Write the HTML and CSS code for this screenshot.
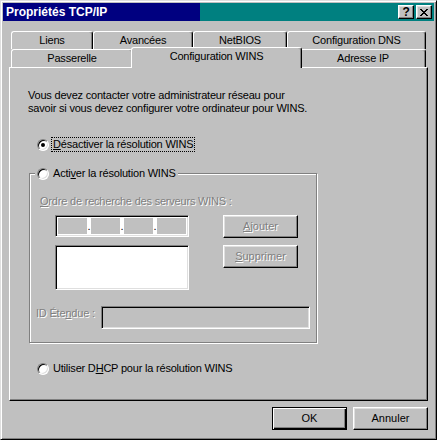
FILE: index.html
```html
<!doctype html>
<html><head>
<meta charset="utf-8">
<title>Propriétés TCP/IP</title>
<link rel="stylesheet" href="styles.css">
</head><body>
<div class="window">
	<div class="titlebar">
		<h1>Propriétés TCP/IP</h1>
		<span class="title-btn">?</span>
		<span class="title-btn close"><svg width="8" height="7" viewBox="0 0 8 7"><path d="M0 0h2v1h1v1h2v-1h1v-1h2v1h-1v1h-1v1h-1v1h1v1h1v1h1v1h-2v-1h-1v-1h-2v1h-1v1h-2v-1h1v-1h1v-1h1v-1h-1v-1h-1v-1h-1z" fill="#000"/></svg></span>
	</div>

	<div class="tabs">
		<div class="tab-row">
			<div class="tab" style="width:82px">Liens</div>
			<div class="tab" style="width:100px">Avancées</div>
			<div class="tab" style="width:94px">NetBIOS</div>
			<div class="tab" style="width:139px">Configuration DNS</div>
		</div>
		<div class="tab-row">
			<div class="tab" style="width:122px">Passerelle</div>
			<div class="tab active" style="width:171px">Configuration WINS</div>
			<div class="tab" style="width:126px">Adresse IP</div>
		</div>
	</div>

	<div class="panel">
		<p class="intro">Vous devez contacter votre administrateur réseau pour<br>savoir si vous devez configurer votre ordinateur pour WINS.</p>

		<div class="radio-row first">
			<span class="radio checked"></span>
			<span class="focus"><u>D</u>ésactiver la résolution WINS</span>
		</div>

		<fieldset class="group">
			<legend class="radio-row">
				<span class="radio"></span>
				<span>Acti<u>v</u>er la résolution WINS</span>
			</legend>
			<div class="disabled"><u>O</u>rdre de recherche des serveurs WINS :</div>
			<div class="server-row">
				<div class="ip-col">
					<div class="field ip-field">
						<span class="octet"></span><span class="dot">.</span>
						<span class="octet"></span><span class="dot">.</span>
						<span class="octet"></span><span class="dot">.</span>
						<span class="octet"></span>
					</div>
					<div class="field listbox"></div>
				</div>
				<div class="btn-col">
					<button class="btn disabled" disabled><u>A</u>jouter</button>
					<button class="btn disabled" disabled><u>S</u>upprimer</button>
				</div>
			</div>
			<div class="scope-row">
				<label class="disabled">ID Éte<u>n</u>due :</label>
				<div class="field scope-field"></div>
			</div>
		</fieldset>

		<div class="radio-row last">
			<span class="radio"></span>
			<span>Utiliser D<u>H</u>CP pour la résolution WINS</span>
		</div>
	</div>

	<div class="actions">
		<button class="btn default">OK</button>
		<button class="btn">Annuler</button>
	</div>
</div>
</body></html>
```

FILE: styles.css
```css
body {
	margin: 0;
	background: #c0c0c0;
	font: 11px/13px 'Liberation Sans', Arial, sans-serif;
	letter-spacing: -0.2px;
	color: #000;
}

u {
	text-decoration: underline;
	text-underline-offset: 1px;
}

.window {
	width: 437px;
	height: 440px;
	box-sizing: border-box;
	padding: 2px;
	border: 1px solid;
	border-color: #dfdfdf #000 #000 #dfdfdf;
	box-shadow: inset 1px 1px #fff, inset -1px -1px #808080;
}

/* title bar */
.titlebar {
	display: flex;
	align-items: center;
	height: 18px;
	padding: 0 2px 0 3px;
	background: linear-gradient(to right, #000080 197px, #008080 197px);
	color: #fff;
	font-weight: bold;
}

.titlebar h1 {
	flex: 1;
	margin: 0;
	font: inherit;
	font-size: 12px;
	letter-spacing: 0;
	line-height: 18px;
}

.title-btn {
	display: flex;
	align-items: center;
	justify-content: center;
	width: 16px;
	height: 14px;
	box-sizing: border-box;
	margin-left: 2px;
	background: #c0c0c0;
	color: #000;
	font-size: 12px;
	border: 1px solid;
	border-color: #fff #000 #000 #fff;
	box-shadow: inset -1px -1px #808080, inset 1px 1px #dfdfdf;
}

/* tabs */
.tabs {
	width: 415px;
	margin: 10px 0 0 8px;
}

.tab-row {
	display: flex;
	align-items: flex-start;
	height: 18px;
}

.tab {
	height: 18px;
	box-sizing: border-box;
	padding-top: 2px;
	text-align: center;
	background: #c0c0c0;
	border: 1px solid #fff;
	border-bottom: 0;
	border-right-color: #000;
	border-radius: 3px 3px 0 0;
	box-shadow: inset -1px 0 #808080;
}

.tab.active {
	position: relative;
	z-index: 1;
	height: 21px;
	margin: -2px -2px 0 -2px;
}

/* page */
.panel {
	height: 334px;
	box-sizing: border-box;
	margin: 0 6px;
	padding: 21px 0 0 18px;
	border: 1px solid;
	border-color: #fff #000 #000 #fff;
	box-shadow: inset -1px -1px #808080;
}

.intro {
	margin: 0;
}

.radio-row {
	display: flex;
	align-items: center;
	height: 13px;
	margin-left: 9px;
}

.radio-row.first {
	margin-top: 23px;
}

.radio-row.last {
	margin-top: 19px;
}

.radio {
	display: flex;
	align-items: center;
	justify-content: center;
	width: 12px;
	height: 12px;
	box-sizing: border-box;
	margin-right: 4px;
	background: #fff;
	border: 1px solid;
	border-color: #808080 #fff #fff #808080;
	border-radius: 50%;
	box-shadow: inset 1px 1px #000, inset -1px -1px #dfdfdf;
}

.radio.checked::after {
	content: "";
	width: 4px;
	height: 4px;
	border-radius: 50%;
	background: #000;
}

.focus {
	outline: 1px dotted #000;
	padding: 0 1px;
	margin-left: -1px;
}

.group {
	width: 288px;
	box-sizing: border-box;
	min-width: 0;
	margin: 16px 0 0 1px;
	padding: 0 6px 13px 10px;
	border: 1px solid #808080;
	box-shadow: 1px 1px #fff, inset 1px 1px #fff;
}

.group legend {
	margin-left: -5px;
	padding: 0 2px;
	background: #c0c0c0;
}

.group legend + div {
	margin-top: 15px;
}

.disabled {
	color: #808080;
	text-shadow: 1px 1px 0 #fff;
}

.server-row {
	display: flex;
	gap: 34px;
	margin: 7px 0 0 15px;
}

.ip-col {
	display: flex;
	flex-direction: column;
	gap: 8px;
	width: 134px;
}

.field {
	box-sizing: border-box;
	border: 1px solid;
	border-color: #808080 #fff #fff #808080;
	box-shadow: inset 1px 1px #000, inset -1px -1px #dfdfdf;
}

.ip-field {
	display: flex;
	height: 22px;
	padding: 2px;
	background: #fff;
}

.octet {
	flex: 1;
	background: #c0c0c0;
}

.dot {
	width: 4px;
	text-align: center;
	line-height: 16px;
	color: #000;
}

.listbox {
	height: 45px;
	background: #fff;
}

.btn-col {
	display: flex;
	flex-direction: column;
	gap: 7px;
}

.btn {
	width: 75px;
	height: 23px;
	box-sizing: border-box;
	padding: 0;
	font: inherit;
	color: #000;
	background: #c0c0c0;
	border: 1px solid;
	border-color: #fff #000 #000 #fff;
	border-radius: 0;
	box-shadow: inset -1px -1px #808080, inset 1px 1px #dfdfdf;
}

.btn.disabled {
	color: #808080;
	text-shadow: 1px 1px 0 #fff;
}

.btn.default {
	border-color: #000;
	box-shadow: inset 1px 1px #fff, inset -1px -1px #000, inset -2px -2px #808080;
}

.scope-row {
	display: flex;
	justify-content: space-between;
	align-items: flex-start;
	margin-top: 16px;
}

.scope-row label {
	margin: 1px 0 0 -4px;
}

.scope-field {
	width: 209px;
	height: 23px;
	background: #c0c0c0;
}

/* dialog buttons */
.actions {
	display: flex;
	justify-content: flex-end;
	gap: 6px;
	margin: 6px 6px 0 0;
}
```
